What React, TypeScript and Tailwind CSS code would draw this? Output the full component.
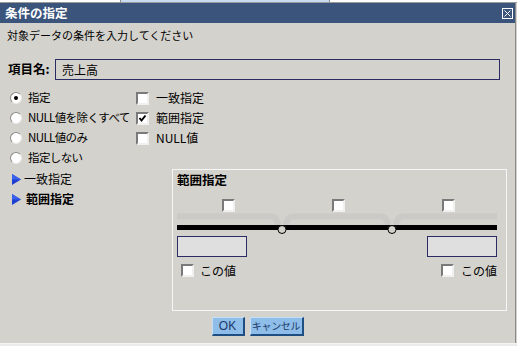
import React from "react";

const Radio = ({ checked }: { checked?: boolean }) => (
  <div className="w-[12px] h-[12px] rounded-full bg-white border border-t-[#8a8a8a] border-l-[#8a8a8a] border-r-[#e8e8e8] border-b-[#e8e8e8] flex items-center justify-center shrink-0">
    {checked && <div className="w-[4px] h-[4px] rounded-full bg-black" />}
  </div>
);

const Check = ({ checked }: { checked?: boolean }) => (
  <div className="w-[13px] h-[13px] bg-white border-2 border-t-[#7a7a7a] border-l-[#7a7a7a] border-r-[#f0f0f0] border-b-[#f0f0f0] shrink-0 flex items-center justify-center">
    {checked && (
      <svg width="9" height="9" viewBox="0 0 9 9">
        <path d="M1.5 4 L3.5 6.5 L7.5 1.5" stroke="#000" strokeWidth="2" fill="none" />
      </svg>
    )}
  </div>
);

const Tri = () => (
  <svg width="9" height="11" viewBox="0 0 9 11" className="shrink-0">
    <polygon points="0,0 9,5.5 0,11" fill="#1d3fd2" />
    <polygon points="0,0 9,5.5 0,5.5" fill="#3a62ea" />
  </svg>
);

export default function App() {
  return (
    <div className="w-[517px] h-[346px] bg-[#e6e6e6] font-['Noto_Sans_CJK_JP',sans-serif] text-black text-[12px] flex flex-col overflow-hidden whitespace-nowrap">
      {/* top strip */}
      <div className="h-[3px] flex bg-white border-b border-[#9a9a9a] shrink-0">
        <div className="w-[120px]" />
        <div className="w-[210px] bg-[#c9dcf1] border-x border-[#8a8a8a]" />
      </div>
      <div className="w-[517px] h-[340px] flex shrink-0">
        <div className="w-[515px] h-[340px] bg-[#d4d2cc] flex flex-col">
          {/* title bar */}
          <div className="h-[20px] bg-[#3a547c] flex items-center pl-[5px] pr-[2px] shrink-0">
            <span className="text-white font-bold text-[12.5px] leading-[20px]">条件の指定</span>
            <svg width="11" height="11" viewBox="0 0 11 11" className="ml-auto">
              <rect x="0.5" y="0.5" width="10" height="10" fill="none" stroke="#fff" />
              <path d="M2.5 2.5 L8.5 8.5 M8.5 2.5 L2.5 8.5" stroke="#fff" strokeWidth="1" />
            </svg>
          </div>
          {/* subtitle */}
          <div className="mt-[6px] pl-[7px] h-[12px] leading-[12px] text-[11px]">対象データの条件を入力してください</div>
          {/* item row */}
          <div className="mt-[18px] pl-[8px] h-[21px] flex items-center">
            <span className="w-[47px] font-bold text-[12.5px]">項目名:</span>
            <div className="w-[445px] h-[21px] border border-[#2c2c64] flex items-center pl-[6px] text-[12px]">売上高</div>
          </div>
          {/* options */}
          <div className="mt-[8px] flex">
            <div className="w-[136px] pl-[10px] flex flex-col">
              {[
                ["指定", true],
                ["NULL値を除くすべて", false],
                ["NULL値のみ", false],
                ["指定しない", false],
              ].map(([t, c], i) => (
                <div key={i} className="h-[20px] flex items-center gap-[6px]">
                  <Radio checked={c as boolean} />
                  <span className="text-[11.5px] tracking-[-0.6px]">{t as string}</span>
                </div>
              ))}
            </div>
            <div className="flex flex-col">
              {[
                ["一致指定", false],
                ["範囲指定", true],
                ["NULL値", false],
              ].map(([t, c], i) => (
                <div key={i} className="h-[20px] flex items-center gap-[7px]">
                  <Check checked={c as boolean} />
                  <span>{t as string}</span>
                </div>
              ))}
            </div>
          </div>
          {/* lower section */}
          <div className="mt-[1px] flex">
            <div className="w-[172px] pl-[12px] flex flex-col">
              <div className="h-[20px] flex items-center gap-[3px]">
                <Tri />
                <span>一致指定</span>
              </div>
              <div className="h-[20px] flex items-center gap-[5px]">
                <Tri />
                <span className="font-bold">範囲指定</span>
              </div>
            </div>
            <div className="w-[335px] h-[142px] border border-[#f6f6f6] pl-[4px] pr-[9px] flex flex-col">
              <div className="mt-[4px] h-[12px] leading-[12px] font-bold text-[12.5px]">範囲指定</div>
              <div className="mt-[13px] h-[13px] flex pl-[45px] gap-[97px]">
                <Check />
                <Check />
                <Check />
              </div>
              <svg width="320" height="21" viewBox="0 0 320 21" className="mt-[1px]">
                <g stroke="#cbcac6" strokeWidth="6" fill="none">
                  <path d="M0 3.5 H94 Q100 3.5 101 12" />
                  <path d="M109 12 Q110 3.5 116 3.5 H204 Q210 3.5 211 12" />
                  <path d="M219 12 Q220 3.5 226 3.5 H320" />
                </g>
                <rect x="0" y="12" width="320" height="5" fill="#000" />
                <circle cx="105" cy="16.5" r="4" fill="#d4d2cc" stroke="#000" strokeWidth="1" />
                <circle cx="215" cy="16.5" r="4" fill="#d4d2cc" stroke="#000" strokeWidth="1" />
              </svg>
              <div className="mt-[2px] h-[21px] flex justify-between">
                <div className="w-[70px] h-[21px] bg-[#dfdfdf] border border-[#2c2c64]" />
                <div className="w-[70px] h-[21px] bg-[#dfdfdf] border border-[#2c2c64]" />
              </div>
              <div className="mt-[7px] h-[13px] flex justify-between items-center">
                <div className="pl-[4px] flex items-center gap-[6px]">
                  <Check />
                  <span>この値</span>
                </div>
                <div className="flex items-center gap-[7px]">
                  <Check />
                  <span>この値</span>
                </div>
              </div>
            </div>
          </div>
          {/* buttons */}
          <div className="mt-[6px] flex justify-center gap-[5px]">
            <button className="w-[33px] h-[19px] bg-[#8dbde8] border border-t-[#c6def4] border-l-[#c6def4] border-r-2 border-b-2 border-r-[#1f4f82] border-b-[#1f4f82] text-[#1c3a68] text-[12px] leading-[14px] font-['Liberation_Sans',sans-serif]">OK</button>
            <button className="w-[54px] h-[19px] bg-[#8dbde8] border border-t-[#c6def4] border-l-[#c6def4] border-r-2 border-b-2 border-r-[#1f4f82] border-b-[#1f4f82] text-[#1c3a68] text-[10px] leading-[14px] whitespace-nowrap tracking-[-0.3px]">キャンセル</button>
          </div>
        </div>
        <div className="w-[1px] bg-[#8a8a8a]" />
        <div className="w-[1px] bg-[#d4d2cc]" />
      </div>
      <div className="h-[3px] bg-[#ebebeb] border-t border-[#f4f4f4]" />
    </div>
  );
}
